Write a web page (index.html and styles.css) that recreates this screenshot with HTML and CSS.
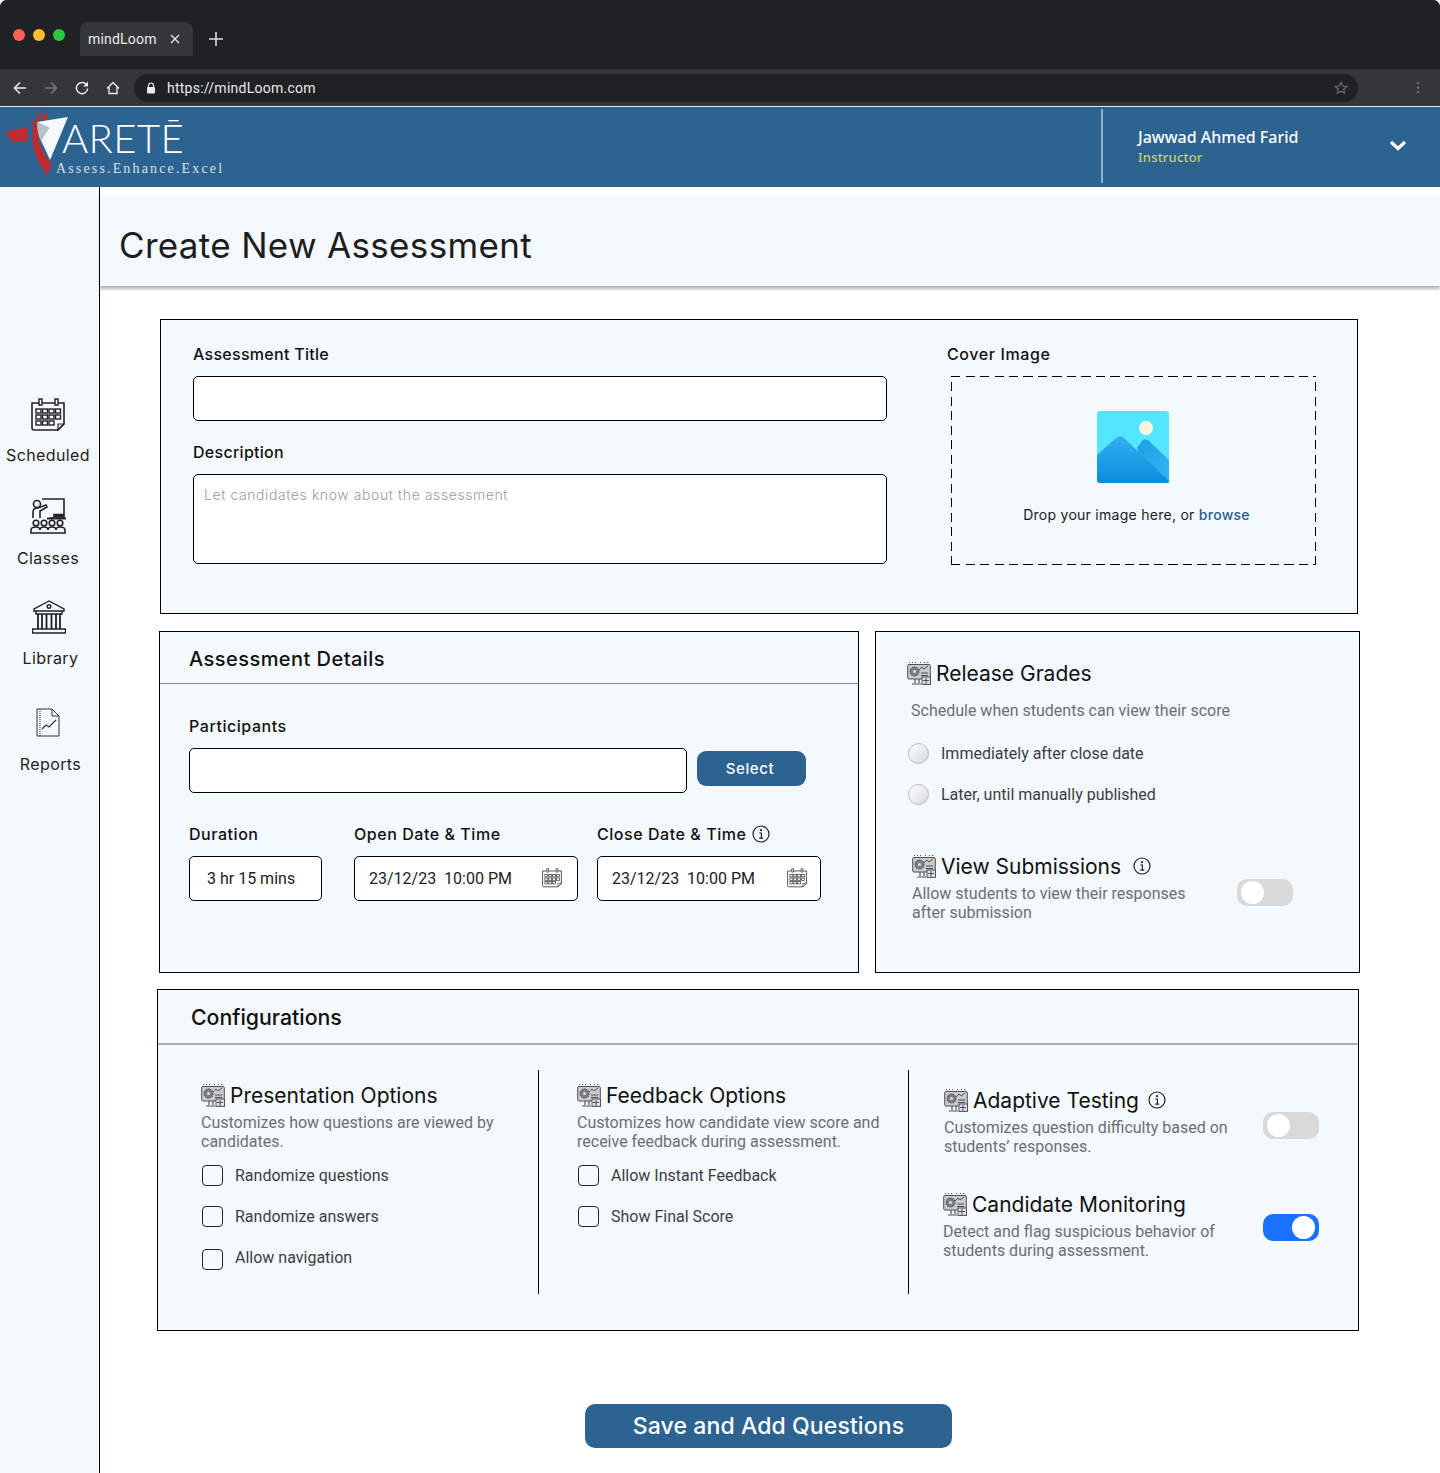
FILE: index.html
```html
<!DOCTYPE html>
<html>
<head>
    <meta charset="utf-8">
    <title>mindLoom</title>
    <link rel="stylesheet" href="styles.css">
</head>
<body>
    <svg class="defs" width="0" height="0">
        <symbol id="i-gear" viewBox="0 0 24 24">
            <rect x="0.7" y="3.500" width="22.600" height="14.500" rx="1.200" fill="#c9cbcd" stroke="#4f5256" stroke-width="1"/>
            <path d="M2 1.500h1M5 1.500h1M8 1.500h1M13 1.500h1M17 1.500h1M20 1.500h1.500" stroke="#4f5256" stroke-width="1"/>
            <circle cx="7.500" cy="10.500" r="4.400" fill="#7d8084" stroke="#4f5256" stroke-width="1.200" stroke-dasharray="1.400 .8"/>
            <circle cx="7.500" cy="10.500" r="1.500" fill="#dedede"/>
            <path d="M12 9l3-3 2 2 4-3" fill="none" stroke="#4f5256" stroke-width="1"/>
            <path d="M14 12h7M14 14.500h7" stroke="#4f5256" stroke-width="1"/>
            <rect x="15" y="16" width="8.500" height="7.400" fill="#dfe2e5" stroke="#4f5256" stroke-width="1"/>
            <path d="M16 19.500h6M19 17v6" stroke="#4f5256" stroke-width="1"/>
            <path d="M8 18v4M12 18v4M5 23h9" stroke="#4f5256" stroke-width="1.200" fill="none"/>
        </symbol>
        <symbol id="i-info" viewBox="0 0 18 18">
            <circle cx="9" cy="9" r="8" fill="none" stroke="#222" stroke-width="1.200"/>
            <circle cx="9" cy="5.200" r="1.100" fill="#222"/>
            <path d="M7.300 8h2.100v5M7.200 13.200h4" fill="none" stroke="#222" stroke-width="1.200"/>
        </symbol>
        <symbol id="i-cal" viewBox="0 0 34 34">
            <path d="M1 5h32v21l-6 6H3a2 2 0 0 1-2-2z" fill="none" stroke="currentColor" stroke-width="1.600"/>
            <path d="M8 1h3v6H8zM24 1h3v6h-3z" fill="#f4f9fd" stroke="currentColor" stroke-width="1.400"/>
            <path d="M33 26h-6v6z" fill="none" stroke="currentColor" stroke-width="1.200"/>
            <g fill="none" stroke="currentColor" stroke-width="1.400">
                <rect x="5" y="11" width="5" height="4"/><rect x="11.500" y="11" width="5" height="4"/><rect x="18" y="11" width="5" height="4"/><rect x="24.500" y="11" width="5" height="4"/>
                <rect x="5" y="17" width="5" height="4"/><rect x="11.500" y="17" width="5" height="4"/><rect x="18" y="17" width="5" height="4"/><rect x="24.500" y="17" width="5" height="4"/>
                <rect x="5" y="23" width="5" height="4"/><rect x="11.500" y="23" width="5" height="4"/><rect x="18" y="23" width="5" height="4"/>
            </g>
        </symbol>
    </svg>

    <div class="chrome">
        <div class="tabstrip">
            <span class="light light-red"></span>
            <span class="light light-yellow"></span>
            <span class="light light-green"></span>
            <div class="tab">
                <span>mindLoom</span>
                <svg width="10" height="10" viewBox="0 0 10 10"><path d="M1 1l8 8M9 1l-8 8" stroke="#e8eaed" stroke-width="1.200"/></svg>
            </div>
            <svg class="newtab" width="14" height="14" viewBox="0 0 14 14"><path d="M7 0v14M0 7h14" stroke="#dcdde0" stroke-width="1.600"/></svg>
        </div>
        <div class="toolbar">
            <svg class="nav-icon" width="14" height="14" viewBox="0 0 14 14"><path d="M13 7H2M7 1.500L1.500 7 7 12.500" fill="none" stroke="#e8eaed" stroke-width="1.600"/></svg>
            <svg class="nav-icon" width="14" height="14" viewBox="0 0 14 14"><path d="M1 7h11M7 1.500L12.500 7 7 12.500" fill="none" stroke="#75777b" stroke-width="1.600"/></svg>
            <svg class="nav-icon" width="14" height="14" viewBox="0 0 14 14"><path d="M12 4.500A5.600 5.600 0 1 0 12.600 7.500" fill="none" stroke="#e8eaed" stroke-width="1.500"/><path d="M13 0.500v5h-5z" fill="#e8eaed"/></svg>
            <svg class="nav-icon nav-last" width="14" height="14" viewBox="0 0 14 14"><path d="M1 7.500L7 1.500l6 6M3 6v6.500h8V6" fill="none" stroke="#e8eaed" stroke-width="1.400"/></svg>
            <div class="urlbar">
                <svg width="10" height="12" viewBox="0 0 10 12"><path d="M2.500 5V3.500a2.500 2.500 0 0 1 5 0V5" fill="none" stroke="#e8eaed" stroke-width="1.200"/><rect x="1" y="5" width="8" height="6.500" rx="1" fill="#e8eaed"/></svg>
                <span class="url">https://mindLoom.com</span>
                <svg class="star" width="14" height="14" viewBox="0 0 14 14"><path d="M7 1.300l1.700 3.700 4 .5-3 2.700.8 4L7 10.200 3.500 12.200l.8-4-3-2.700 4-.5z" fill="none" stroke="#6b6d71" stroke-width="1.200"/></svg>
            </div>
            <svg class="kebab" width="4" height="13" viewBox="0 0 4 13"><circle cx="2" cy="2" r="1.300" fill="#6b6d71"/><circle cx="2" cy="6.500" r="1.300" fill="#6b6d71"/><circle cx="2" cy="11" r="1.300" fill="#6b6d71"/></svg>
        </div>
    </div>

    <header class="app-header">
        <div class="logo">
            <svg class="logo-mark" width="66" height="72" viewBox="0 0 66 72">
                <path d="M0 25l22-5 1 14-15 1z" fill="#c22b30"/>
                <path d="M38 1C24 16 22 42 42 68l5-11C34 44 28 24 38 1z" fill="#b92b31"/>
                <circle cx="40" cy="10" r="3" fill="#c22b30"/>
                <circle cx="27" cy="15" r="1.500" fill="#c22b30"/>
                <path d="M32 15l31-5-18 43-9-20 8-12z" fill="#f5f9fd"/>
                <path d="M32 15l12 6-8 12 3 7c-5-8-7-16-7-25z" fill="#b7c1cc"/>
            </svg>
            <div class="logo-name">ARETĒ</div>
            <div class="logo-tag">Assess.Enhance.Excel</div>
        </div>
        <div class="user">
            <div class="user-text">
                <div class="user-name">Jawwad Ahmed Farid</div>
                <div class="user-role">Instructor</div>
            </div>
            <svg class="chevron" width="18" height="11" viewBox="0 0 18 11"><path d="M2 2l7 6.500L16 2" fill="none" stroke="#fff" stroke-width="3.200"/></svg>
        </div>
    </header>

    <div class="shell">
        <nav class="sidebar">
            <a class="side-item side-scheduled">
                <svg class="side-icon" width="34" height="34"><use href="#i-cal"/></svg>
                <span>Scheduled</span>
            </a>
            <a class="side-item side-classes">
                <svg class="side-icon" width="36" height="36" viewBox="0 0 36 36" fill="none" stroke="#222" stroke-width="1.600">
                    <path d="M12 1h22v19H20"/>
                    <path d="M17 20.500h19" stroke-width="2"/>
                    <path d="M24 19v-2.500h9V19" fill="#222"/>
                    <circle cx="7" cy="6" r="3.500"/>
                    <path d="M3 20v-6c0-3 2-4 5-4l8-3 1 2-7 4v7"/>
                    <circle cx="6" cy="25" r="2.800"/><circle cx="14" cy="25" r="2.800"/><circle cx="22" cy="25" r="2.800"/><circle cx="30" cy="25" r="2.800"/>
                    <path d="M1 35v-3c0-2 2-3 5-3s4 1 4 3c0-2 1-3 4-3s4 1 4 3c0-2 1-3 4-3s4 1 4 3c0-2 1-3 4-3s5 1 5 3v3z"/>
                </svg>
                <span>Classes</span>
            </a>
            <a class="side-item side-library">
                <svg class="side-icon" width="34" height="34" viewBox="0 0 34 34" fill="none" stroke="#222" stroke-width="1.400">
                    <path d="M17 1L2 9v2h30V9z"/>
                    <circle cx="17" cy="6.500" r="1.800"/>
                    <path d="M4 11v3h26v-3M2 29h30M0.500 33h33v-4h-33z"/>
                    <path d="M6 14v15M10 14v15M14.500 14v15M19.500 14v15M24 14v15M28 14v15" stroke-width="1.800"/>
                </svg>
                <span>Library</span>
            </a>
            <a class="side-item side-reports">
                <svg class="side-icon" width="24" height="29" viewBox="0 0 24 29" fill="none" stroke="#333" stroke-width="1">
                    <path d="M1 1h15l7 7v20H1zM16 1v7h7"/>
                    <path d="M4 1v27" stroke-dasharray="1 1"/>
                    <path d="M6 21l4-4 3 2 7-7" stroke-width="1.200"/>
                </svg>
                <span>Reports</span>
            </a>
        </nav>

        <main class="main">
            <div class="title-bar">
                <h1>Create New Assessment</h1>
            </div>
            <div class="cards">
                <section class="card card-basic">
                    <div class="basic-left">
                        <label class="field-label">Assessment Title</label>
                        <input class="field field-title" type="text">
                        <label class="field-label label-desc">Description</label>
                        <textarea class="field field-desc" placeholder="Let candidates know about the assessment"></textarea>
                    </div>
                    <div class="basic-right">
                        <label class="field-label">Cover Image</label>
                        <div class="dropzone">
                            <svg width="72" height="72" viewBox="0 0 72 72">
                                <defs>
                                    <linearGradient id="hillA" x1="0" y1="0" x2="0" y2="1"><stop offset="0" stop-color="#2fb2ec"/><stop offset="1" stop-color="#0a8ce0"/></linearGradient>
                                    <linearGradient id="hillB" x1="0" y1="0" x2="1" y2="1"><stop offset="0" stop-color="#1f9ee6"/><stop offset="1" stop-color="#35b6ee"/></linearGradient>
                                </defs>
                                <rect width="72" height="72" rx="3" fill="#54e6ff"/>
                                <circle cx="49" cy="17" r="7" fill="#fff5dc"/>
                                <path d="M40 37l5-7c2-2 5-2 7 0l20 19v23H54z" fill="url(#hillB)"/>
                                <path d="M0 44l19-17c3-2 6-2 8 0l45 43c-1 1-2 2-3 2H3c-2 0-3-1-3-3z" fill="url(#hillA)"/>
                            </svg>
                            <p class="drop-text">Drop your image here, or <a class="browse">browse</a></p>
                        </div>
                    </div>
                </section>

                <div class="row">
                    <section class="card card-details">
                        <h2 class="card-head head-details">Assessment Details</h2>
                        <div class="details-body">
                            <label class="field-label">Participants</label>
                            <div class="participants">
                                <input class="field field-part" type="text">
                                <button class="btn-select">Select</button>
                            </div>
                            <div class="dates">
                                <div class="date-col col-duration">
                                    <label class="field-label">Duration</label>
                                    <div class="field date-box"><span class="duration-val">3 hr 15 mins</span></div>
                                </div>
                                <div class="date-col col-open">
                                    <label class="field-label">Open Date &amp; Time</label>
                                    <div class="field date-box">
                                        <span>23/12/23&nbsp; 10:00 PM</span>
                                        <svg class="cal-small" width="20" height="20"><use href="#i-cal"/></svg>
                                    </div>
                                </div>
                                <div class="date-col col-close">
                                    <label class="field-label">Close Date &amp; Time <svg class="info info-close" width="18" height="18"><use href="#i-info"/></svg></label>
                                    <div class="field date-box">
                                        <span>23/12/23&nbsp; 10:00 PM</span>
                                        <svg class="cal-small" width="20" height="20"><use href="#i-cal"/></svg>
                                    </div>
                                </div>
                            </div>
                        </div>
                    </section>

                    <section class="card card-release">
                        <h3 class="opt-title release-title"><svg class="opt-icon" width="24" height="24"><use href="#i-gear"/></svg>Release Grades</h3>
                        <p class="opt-desc release-desc">Schedule when students can view their score</p>
                        <div class="radio-row radio-first"><span class="radio"></span><span>Immediately after close date</span></div>
                        <div class="radio-row"><span class="radio"></span><span>Later, until manually published</span></div>
                        <div class="toggle-row view-sub">
                            <div class="toggle-text">
                                <h3 class="opt-title"><svg class="opt-icon" width="24" height="24"><use href="#i-gear"/></svg>View Submissions<svg class="info info-view" width="18" height="18"><use href="#i-info"/></svg></h3>
                                <p class="opt-desc">Allow students to view their responses<br>after submission</p>
                            </div>
                            <span class="toggle"></span>
                        </div>
                    </section>
                </div>

                <section class="card card-config">
                    <h2 class="card-head head-config">Configurations</h2>
                    <div class="config-cols">
                        <div class="config-col col-a">
                            <h3 class="opt-title"><svg class="opt-icon" width="24" height="24"><use href="#i-gear"/></svg>Presentation Options</h3>
                            <p class="opt-desc">Customizes how questions are viewed by<br>candidates.</p>
                            <div class="check-row"><span class="check"></span><span>Randomize questions</span></div>
                            <div class="check-row"><span class="check"></span><span>Randomize answers</span></div>
                            <div class="check-row check-last"><span class="check"></span><span class="check-lift">Allow navigation</span></div>
                        </div>
                        <div class="config-col col-b">
                            <h3 class="opt-title"><svg class="opt-icon" width="24" height="24"><use href="#i-gear"/></svg>Feedback Options</h3>
                            <p class="opt-desc">Customizes how candidate view score and<br>receive feedback during assessment.</p>
                            <div class="check-row"><span class="check"></span><span>Allow Instant Feedback</span></div>
                            <div class="check-row"><span class="check"></span><span>Show Final Score</span></div>
                        </div>
                        <div class="config-col col-c">
                            <div class="toggle-row adaptive">
                                <div class="toggle-text">
                                    <h3 class="opt-title"><svg class="opt-icon" width="24" height="24"><use href="#i-gear"/></svg>Adaptive Testing<svg class="info info-adaptive" width="18" height="18"><use href="#i-info"/></svg></h3>
                                    <p class="opt-desc">Customizes question difficulty based on<br>students’ responses.</p>
                                </div>
                                <span class="toggle"></span>
                            </div>
                            <div class="toggle-row monitoring">
                                <div class="toggle-text">
                                    <h3 class="opt-title"><svg class="opt-icon" width="24" height="24"><use href="#i-gear"/></svg>Candidate Monitoring</h3>
                                    <p class="opt-desc">Detect and flag suspicious behavior of<br>students during assessment.</p>
                                </div>
                                <span class="toggle toggle-on"></span>
                            </div>
                        </div>
                    </div>
                </section>

                <button class="btn-save">Save and Add Questions</button>
            </div>
        </main>
    </div>
</body>
</html>
```
FILE: styles.css
```css
* {
    box-sizing: border-box;
}
html, body {
    margin: 0;
    padding: 0;
}
body {
    width: 1440px;
    height: 1473px;
    overflow: hidden;
    background: #fff;
    font-family: Inter, "Liberation Sans", sans-serif;
    color: #111;
}
.defs {
    display: block;
    height: 0;
}

/* browser frame */
.chrome {
    height: 106px;
    background: #35363a;
    border-radius: 7px 7px 0 0;
    overflow: hidden;
    font-family: Roboto, sans-serif;
}
.tabstrip {
    height: 69px;
    background: #202124;
    display: flex;
    align-items: flex-start;
    padding: 29px 0 0 13px;
}
.light {
    width: 12px;
    height: 12px;
    border-radius: 50%;
    margin-right: 8px;
}
.light-red { background: #ff5f57; }
.light-yellow { background: #febc2e; }
.light-green { background: #28c840; margin-right: 0; }
.tab {
    margin: -7px 0 0 15px;
    width: 113px;
    height: 34px;
    background: #35363a;
    border-radius: 8px 8px 0 0;
    color: #e8eaed;
    font-size: 14px;
    display: flex;
    align-items: center;
    justify-content: space-between;
    padding: 0 13px 0 8px;
    letter-spacing: 0.2px;
}
.newtab {
    margin: 3px 0 0 16px;
}
.toolbar {
    height: 37px;
    display: flex;
    align-items: center;
    padding-left: 13px;
}
.nav-icon {
    margin-right: 17px;
}
.nav-last {
    margin-right: 14px;
}
.urlbar {
    width: 1224px;
    height: 28px;
    border-radius: 14px;
    background: #202124;
    display: flex;
    align-items: center;
    padding: 0 10px 0 12px;
}
.url {
    margin-left: 11px;
    color: #e8eaed;
    font-size: 14px;
    letter-spacing: 0.25px;
}
.star {
    margin-left: auto;
}
.kebab {
    margin-left: 58px;
}

/* app header */
.app-header {
    height: 81px;
    border-top: 1px solid #e6e6e6;
    background: #2c6391;
    display: flex;
    justify-content: space-between;
}
.logo {
    position: relative;
    width: 252px;
    border-right: 1px solid #2e6694;
    padding-left: 62px;
}
.logo-mark {
    position: absolute;
    left: 5px;
    top: 0;
}
.logo-name {
    font-family: Lato, sans-serif;
    font-weight: 300;
    font-size: 40px;
    line-height: 44px;
    color: #fff;
    margin-top: 9px;
    margin-bottom: 1px;
    letter-spacing: 0.4px;
}
.logo-tag {
    font-family: "Liberation Serif", serif;
    font-size: 14px;
    line-height: 16px;
    letter-spacing: 2.15px;
    color: #d5e0ea;
    margin-left: -6px;
    white-space: nowrap;
}
.user {
    width: 339px;
    margin-top: 2px;
    height: 74px;
    border-left: 2px solid #8fb0c9;
    display: flex;
    align-items: center;
    padding: 0 33px 0 35px;
    justify-content: space-between;
}
.user-name {
    font-family: "Noto Sans", sans-serif;
    font-weight: 500;
    font-size: 16px;
    line-height: 20px;
    color: #fff;
}
.user-role {
    font-family: "Noto Sans", sans-serif;
    font-weight: 500;
    font-size: 13px;
    line-height: 18px;
    letter-spacing: 0.2px;
    color: #c3d65d;
    margin-top: 1px;
}
.chevron {
    margin-bottom: 1px;
}

/* sidebar */
.shell {
    display: flex;
    height: 1286px;
}
.sidebar {
    width: 100px;
    background: #f4f9fd;
    border-right: 1px solid #000;
    display: flex;
    flex-direction: column;
    align-items: center;
    font-size: 16px;
    letter-spacing: 0.4px;
    color: #222;
}
.side-item {
    display: flex;
    flex-direction: column;
    align-items: center;
}
.side-icon {
    display: block;
    color: #222;
}
.side-scheduled { margin: 211px 0 0 -3px; }
.side-scheduled .side-icon { margin-bottom: 13px; }
.side-classes { margin: 33px 0 0 -3px; }
.side-classes .side-icon { margin: 0 0 14px 0; }
.side-library { margin: 32px 0 0 2px; }
.side-library .side-icon { margin: 0 3px 14px 0; }
.side-reports { margin: 40px 0 0 2px; }
.side-reports .side-icon { margin: 0 5px 17px 0; }
.side-item span {
    line-height: 20px;
}

/* main */
.main {
    flex: 1;
}
.title-bar {
    margin-top: 8px;
    height: 91px;
    background: #f4f9fd;
    box-shadow: 0 3px 3px rgba(0, 0, 0, 0.3);
    display: flex;
    align-items: center;
    padding: 9px 0 0 19px;
}
.title-bar h1 {
    margin: 0;
    font-size: 35px;
    font-weight: 400;
    letter-spacing: 0.32px;
    color: #1d1d1d;
}
.cards {
    padding: 33px 0 0 57px;
}
.card {
    background: #f4f9fd;
    border: 1px solid #000;
}
.card-basic {
    width: 1198px;
    height: 295px;
    margin-left: 3px;
    display: flex;
    padding: 23px 0 0 32px;
}
.field-label {
    display: block;
    font-size: 16px;
    font-weight: 500;
    line-height: 22px;
    letter-spacing: 0.28px;
    color: #111;
}
.basic-right .field-label {
    letter-spacing: 0.6px;
}
.details-body .field-label {
    letter-spacing: 0.55px;
}
.field {
    display: block;
    background: #fff;
    border: 1px solid #000;
    border-radius: 5px;
    margin: 0;
    outline: none;
}
.basic-left {
    width: 694px;
}
.field-title {
    width: 694px;
    height: 45px;
    margin-top: 11px;
}
.label-desc {
    margin-top: 20px;
}
.field-desc {
    width: 694px;
    height: 90px;
    margin-top: 11px;
    padding: 11px 10px;
    resize: none;
    font-family: Inter, sans-serif;
    font-size: 14px;
    line-height: 17px;
    letter-spacing: 0.58px;
}
.field-desc::placeholder {
    color: #9b9b9b;
    font-weight: 300;
}
.basic-right {
    margin-left: 60px;
}
.dropzone {
    width: 365px;
    height: 189px;
    margin: 11px 0 0 4px;
    display: flex;
    flex-direction: column;
    align-items: center;
    padding-top: 35px;
    background:
        repeating-linear-gradient(90deg, #000 0 9px, transparent 9px 14.500px) top / 100% 1px no-repeat,
        repeating-linear-gradient(90deg, #000 0 9px, transparent 9px 14.500px) bottom / 100% 1px no-repeat,
        repeating-linear-gradient(0deg, #000 0 9px, transparent 9px 14.500px) left / 1px 100% no-repeat,
        repeating-linear-gradient(0deg, #000 0 9px, transparent 9px 14.500px) right / 1px 100% no-repeat;
}
.dropzone svg {
    display: block;
    margin-right: 1px;
}
.drop-text {
    margin: 22px 0 0 6px;
    font-size: 14px;
    line-height: 20px;
    letter-spacing: 0.27px;
    color: #1c1c1c;
}
.browse {
    color: #2c5e8f;
    font-weight: 500;
}

.row {
    display: flex;
    margin: 17px 0 0 2px;
    height: 342px;
}
.card-details {
    width: 700px;
    margin-right: 16px;
}
.card-head {
    margin: 0;
    font-weight: 500;
    color: #111;
    border-bottom: 1px solid #85888b;
}
.head-details {
    height: 52px;
    padding: 15px 0 0 29px;
    font-size: 20px;
    line-height: 24px;
    letter-spacing: 0.45px;
}
.details-body {
    padding: 31px 0 0 29px;
}
.participants {
    display: flex;
    align-items: flex-start;
    margin-top: 11px;
}
.field-part {
    width: 498px;
    height: 45px;
}
.btn-select {
    width: 109px;
    height: 35px;
    margin: 3px 0 0 10px;
    padding: 0 3px 0 0;
    background: #2c6391;
    color: #fff;
    border: none;
    border-radius: 9px;
    font-family: Inter, sans-serif;
    font-size: 15px;
    font-weight: 500;
    letter-spacing: 0.6px;
}
.dates {
    display: flex;
    margin-top: 30px;
}
.date-box {
    margin-top: 11px;
    height: 45px;
    display: flex;
    align-items: center;
    justify-content: space-between;
    font-family: Roboto, sans-serif;
    font-size: 16px;
    background: #fff;
    padding: 0 13px 0 14px;
    color: #222;
}
.col-duration { width: 133px; margin-right: 32px; }
.col-open { width: 224px; margin-right: 19px; }
.col-close { width: 224px; }
.col-open .date-box { padding-right: 15px; }
.duration-val {
    margin-left: 3px;
}
.cal-small {
    color: #4c4f53;
    margin-bottom: 2px;
}
.info {
    vertical-align: -3px;
}
.info-close { margin-left: 1px; }
.info-view { margin-left: 12px; }
.info-adaptive { margin-left: 9px; }

.card-release {
    width: 485px;
    padding: 29px 0 0 31px;
}
.opt-title {
    margin: 0;
    display: flex;
    align-items: center;
    height: 24px;
    font-size: 21px;
    font-weight: 400;
    color: #111;
    white-space: nowrap;
}
.opt-icon {
    flex: none;
    margin-right: 5px;
}
.opt-desc {
    margin: 6px 0 0;
    font-family: Roboto, sans-serif;
    font-size: 16px;
    line-height: 19px;
    color: #6b6f76;
}
.release-desc {
    margin: 16px 0 0 4px;
}
.radio-row {
    display: flex;
    align-items: center;
    height: 21px;
    margin: 20px 0 0 1px;
    font-family: Roboto, sans-serif;
    font-size: 16px;
    color: #3a3e45;
}
.radio-first {
    margin-top: 23px;
}
.radio {
    width: 21px;
    height: 21px;
    margin-right: 12px;
    border-radius: 50%;
    border: 1px solid #b6bcc3;
    background: linear-gradient(135deg, #fff, #d5d8dc);
}
.toggle-row {
    display: flex;
    align-items: flex-start;
}
.toggle-text {
    width: 325px;
}
.view-sub {
    margin: 49px 0 0 5px;
}
.toggle {
    flex: none;
    width: 56px;
    height: 27px;
    border-radius: 10px;
    background: #d9d9d9;
    display: flex;
    align-items: center;
    padding: 0 4px;
    margin-top: 25px;
}
.toggle::after {
    content: "";
    width: 23px;
    height: 23px;
    border-radius: 50%;
    background: #fff;
}
.toggle-on {
    background: #1a73ff;
    justify-content: flex-end;
    margin-top: 22px;
}

.card-config {
    width: 1202px;
    height: 342px;
    margin-top: 16px;
}
.head-config {
    height: 55px;
    padding: 14px 0 0 33px;
    font-size: 21.300px;
    line-height: 26px;
    border-bottom: 2px solid #aaadb0;
}
.config-cols {
    display: flex;
    margin-top: 25px;
    height: 224px;
}
.config-col {
    border-right: 1px solid #000;
}
.col-a {
    width: 381px;
    padding: 13px 0 0 43px;
}
.col-b {
    width: 370px;
    padding: 13px 0 0 38px;
}
.col-c {
    flex: 1;
    border-right: none;
    padding-left: 35px;
}
.check-row {
    display: flex;
    align-items: center;
    height: 21px;
    margin-top: 20px;
    font-family: Roboto, sans-serif;
    font-size: 16px;
    color: #3a3e45;
}
.col-a .opt-desc + .check-row,
.col-b .opt-desc + .check-row {
    margin-top: 14px;
}
.check {
    width: 21px;
    height: 21px;
    margin: 0 12px 0 1px;
    border: 1px solid #222;
    border-radius: 4px;
}
.check-last {
    margin-top: 22px;
}
.check-lift {
    margin-bottom: 5px;
}
.adaptive {
    margin-top: 18px;
}
.monitoring {
    margin: 36px 0 0 -1px;
}
.col-c .toggle-text {
    width: 319px;
}
.monitoring .toggle-text {
    width: 320px;
}
.adaptive .toggle {
    margin-top: 24px;
}
.btn-save {
    display: block;
    width: 367px;
    height: 44px;
    margin: 73px 0 0 428px;
    background: #2c6391;
    color: #fff;
    border: none;
    border-radius: 10px;
    font-family: Inter, sans-serif;
    font-size: 23px;
    font-weight: 500;
    letter-spacing: 0.1px;
}
```
